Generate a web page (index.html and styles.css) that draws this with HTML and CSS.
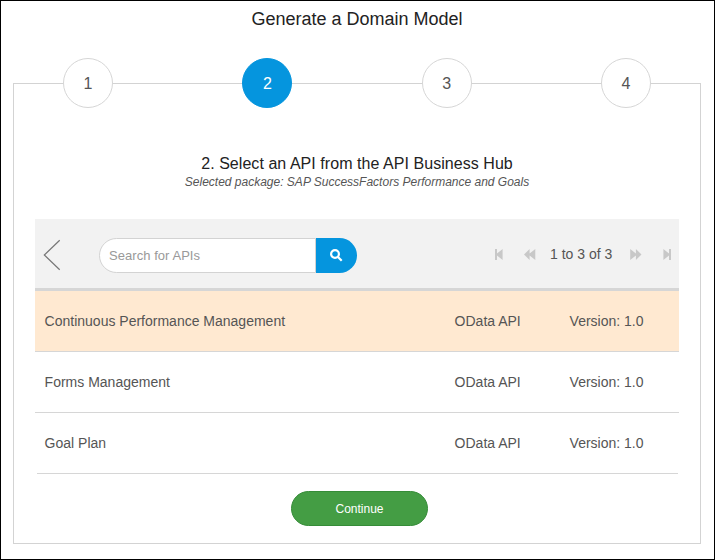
FILE: index.html
```html
<!DOCTYPE html>
<html lang="en">
<head>
<meta charset="utf-8">
<title>Generate a Domain Model</title>
<link rel="stylesheet" href="styles.css">
</head>
<body>
<main class="dialog">
  <h1 class="title"><span>Generate a Domain Model</span></h1>
  <section class="wizard">
    <ol class="steps">
      <li class="step">1</li>
      <li class="step active">2</li>
      <li class="step">3</li>
      <li class="step">4</li>
    </ol>
    <h2 class="heading"><span>2. Select an API from the API Business Hub</span></h2>
    <p class="package"><span>Selected package: SAP SuccessFactors Performance and Goals</span></p>
    <div class="toolbar">
      <svg class="back" width="18" height="32" viewBox="0 0 18 32"><path d="M16.7 1.2 1.3 16 16.7 30.8"/></svg>
      <div class="search">
        <span class="field">Search for APIs</span>
        <span class="go"><svg width="13" height="13" viewBox="0 0 13 13"><circle cx="5" cy="5" r="3.9"/><path d="M8 8l3.7 3.7"/></svg></span>
      </div>
      <div class="pager">
        <svg class="first" width="8" height="11" viewBox="0 0 8 11"><path d="M0 0h2v4.4L7.6 0v11L2 6.6V11H0z"/></svg>
        <svg class="prev" width="12" height="11" viewBox="0 0 12 11"><path d="M0 5.5 5.6 0v4.5L11.3 0v11L5.6 6.5V11z"/></svg>
        <span class="range">1 to 3 of 3</span>
        <svg class="next" width="12" height="11" viewBox="0 0 12 11"><path d="M11.5 5.5 5.9 0v4.5L.2 0v11l5.7-4.5V11z"/></svg>
        <svg class="last" width="8" height="11" viewBox="0 0 8 11"><path d="M8 0H6v4.4L.4 0v11L6 6.6V11h2z"/></svg>
      </div>
    </div>
    <div class="list">
      <div class="row selected"><span>Continuous Performance Management</span><span>OData API</span><span>Version: 1.0</span></div>
      <div class="row"><span>Forms Management</span><span>OData API</span><span>Version: 1.0</span></div>
      <div class="row"><span>Goal Plan</span><span>OData API</span><span>Version: 1.0</span></div>
    </div>
    <button class="continue">Continue</button>
  </section>
</main>
</body>
</html>
```
FILE: styles.css
```css
* { box-sizing: border-box; }
body {
  margin: 0;
  background: #fff;
  color: #555;
  font-family: "Liberation Sans", Arial, sans-serif;
  font-size: 14px;
}
.dialog {
  height: 560px;
  padding: 0 13px 0 12px;
  border: 1px solid #000;
  overflow: hidden;
}
.title {
  margin: 0;
  height: 82px;
  padding-top: 6px;
  font-size: 18px;
  font-weight: 400;
  line-height: 24px;
  color: #222;
  text-align: center;
}
.wizard {
  height: 461px;
  padding: 0 21px;
  border: 1px solid #d3d3d3;
}
.steps {
  display: flex;
  justify-content: space-between;
  margin: -26px 28px 0;
  padding: 0;
  list-style: none;
}
.step {
  width: 50px;
  height: 50px;
  border: 1px solid #d6d6d6;
  border-radius: 50%;
  background: #fff;
  font-size: 16px;
  line-height: 49px;
  text-align: center;
}
.step.active {
  border-color: #0595de;
  background: #0595de;
  color: #fff;
}
.heading {
  margin: 46px 0 0;
  font-size: 16px;
  font-weight: 400;
  letter-spacing: 0.05px;
  line-height: 20px;
  color: #222;
  text-align: center;
}
.package {
  margin: 0;
  font-size: 12px;
  font-style: italic;
  line-height: 17px;
  text-align: center;
}
.toolbar {
  display: flex;
  align-items: center;
  height: 72px;
  margin-top: 28px;
  padding: 0 8px;
  border-bottom: 3px solid #d6d6d6;
  background: #f2f2f2;
}
.back {
  fill: none;
  stroke: #777;
  stroke-width: 1.2;
  margin-top: 3px;
}
.search {
  display: flex;
  width: 258px;
  height: 35px;
  margin: 4px 0 0 38px;
}
.field {
  width: 217px;
  padding-left: 9px;
  border: 1px solid #d3d3d3;
  border-radius: 18px 0 0 18px;
  background: #fff;
  color: #999;
  font-size: 13px;
  letter-spacing: 0.05px;
  line-height: 33px;
}
.go {
  display: flex;
  align-items: center;
  justify-content: center;
  width: 41px;
  border-radius: 0 18px 18px 0;
  background: #0595de;
}
.go svg {
  fill: none;
  stroke: #fff;
  stroke-width: 2.2;
}
.pager {
  display: flex;
  align-items: center;
  margin: 2px 0 0 auto;
}
.pager svg { fill: #c8c8c8; }
.first { margin-right: 21px; }
.prev { margin-right: 14px; }
.range { width: 62px; margin-bottom: 2px; white-space: nowrap; }
.next { margin: 0 21px 0 18px; }
.row {
  display: grid;
  grid-template-columns: 410px 115px 1fr;
  height: 61px;
  padding-left: 9.6px;
  border-bottom: 1px solid #d6d6d6;
  line-height: 60px;
}
.selected { background: #ffe9d1; }
.row:last-child {
  margin: 0 1px 0 2px;
  padding-left: 7.6px;
}
.continue {
  display: block;
  width: 137px;
  height: 35px;
  margin: 17px 0 0 256px;
  padding: 0;
  border: 1px solid #358c38;
  border-radius: 18px;
  background: #449d44;
  color: #fff;
  font: 12px "Liberation Sans", Arial, sans-serif;
}
```
